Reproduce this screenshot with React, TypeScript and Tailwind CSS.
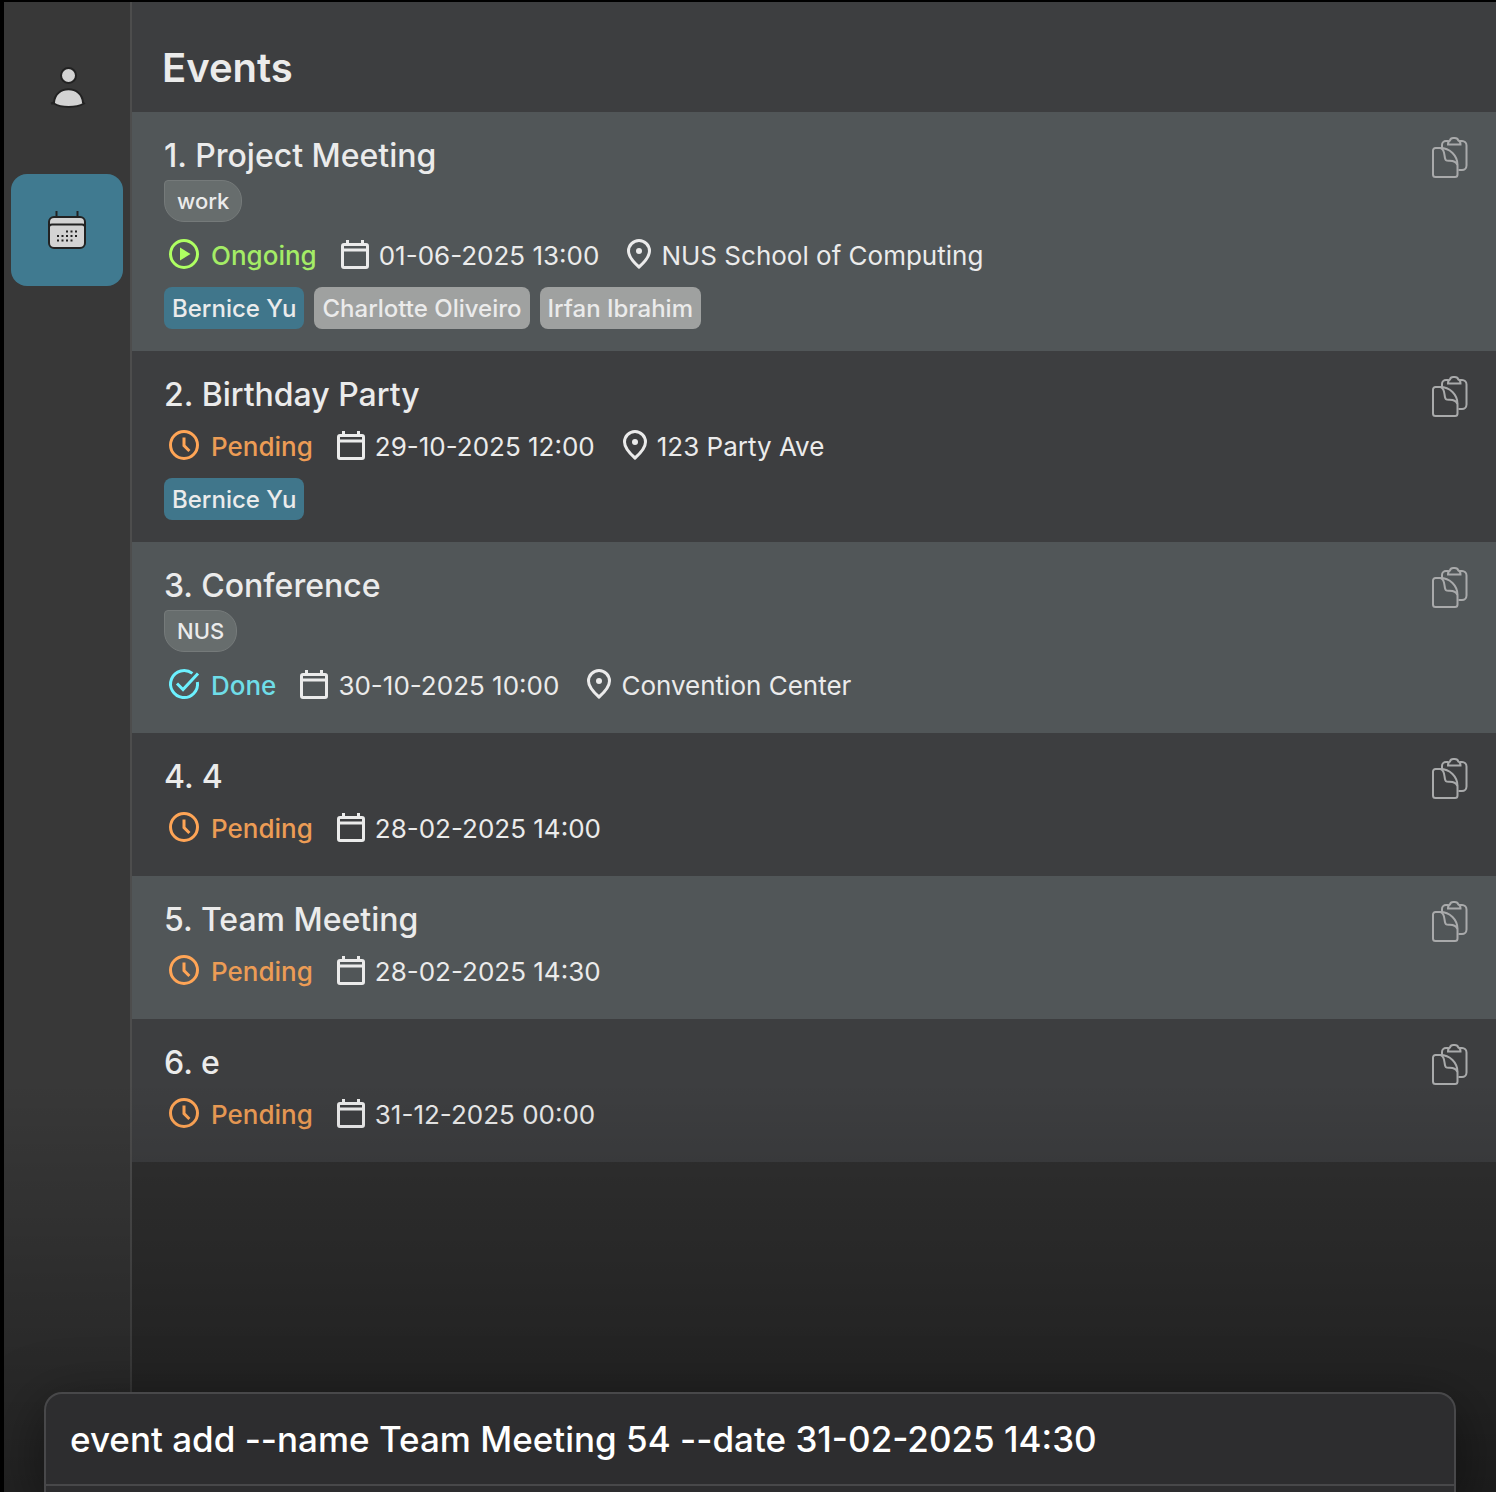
import type { ReactNode } from "react";

type Status = "Ongoing" | "Pending" | "Done";

interface EventItem {
  name: string;
  tag?: string;
  status: Status;
  date: string;
  location?: string;
  people?: { name: string; primary?: boolean }[];
}

const events: EventItem[] = [
  {
    name: "Project Meeting",
    tag: "work",
    status: "Ongoing",
    date: "01-06-2025 13:00",
    location: "NUS School of Computing",
    people: [{ name: "Bernice Yu", primary: true }, { name: "Charlotte Oliveiro" }, { name: "Irfan Ibrahim" }],
  },
  {
    name: "Birthday Party",
    status: "Pending",
    date: "29-10-2025 12:00",
    location: "123 Party Ave",
    people: [{ name: "Bernice Yu", primary: true }],
  },
  { name: "Conference", tag: "NUS", status: "Done", date: "30-10-2025 10:00", location: "Convention Center" },
  { name: "4", status: "Pending", date: "28-02-2025 14:00" },
  { name: "Team Meeting", status: "Pending", date: "28-02-2025 14:30" },
  { name: "e", status: "Pending", date: "31-12-2025 00:00" },
];

const statusText: Record<Status, string> = {
  Ongoing: "text-[#a4ec66]",
  Pending: "text-[#ec9c55]",
  Done: "text-[#6fdde8]",
};

const statusIcon: Record<Status, ReactNode> = {
  Ongoing: (
    <svg viewBox="0 0 36 36" className="size-9 text-[#aeff62]" fill="none" stroke="currentColor" strokeWidth="3">
      <circle cx="18" cy="18" r="13.5" />
      <path d="M14 11.5v13l10.5-6.5z" fill="currentColor" stroke="none" />
    </svg>
  ),
  Pending: (
    <svg viewBox="0 0 36 36" className="size-9 text-[#ffa556]" fill="none" stroke="currentColor" strokeWidth="3">
      <circle cx="18" cy="18" r="13.5" />
      <path d="M18 10.5v8.1l5.4 5.4" />
    </svg>
  ),
  Done: (
    <svg viewBox="0 0 36 36" className="size-9 text-[#6cf1ff]" fill="none" stroke="currentColor" strokeWidth="3">
      <path d="M26.4 7.4A13.5 13.5 0 1 0 31.4 16" />
      <path d="M11 17.5l6 6L32 7.5" />
    </svg>
  ),
};

function CalendarIcon() {
  return (
    <svg viewBox="0 0 36 36" className="size-9" fill="none" stroke="currentColor" strokeWidth="3" aria-hidden="true">
      <rect x="5.500" y="8.500" width="25" height="23" rx="1.500" />
      <path d="M5.500 14h25M10.500 4v4M25.500 4v4" />
    </svg>
  );
}

function PinIcon() {
  return (
    <svg viewBox="0 0 36 36" className="size-9" fill="none" stroke="currentColor" strokeWidth="3" aria-hidden="true">
      <path d="M18 31C13 26.600 7.500 21 7.500 15a10.500 10.500 0 0 1 21 0C28.500 21 23 26.600 18 31z" />
      <circle cx="18" cy="15" r="3" fill="currentColor" stroke="none" />
    </svg>
  );
}

function CopyIcon() {
  return (
    <svg viewBox="0 0 36 42" className="h-[42px] w-9" fill="none" stroke="#a9aaab" strokeWidth="2" aria-hidden="true">
      <path d="M10 12V9a4 4 0 0 1 4-4h2.500M28 5h2a4.500 4.500 0 0 1 4.500 4.500v20a4.500 4.500 0 0 1-4.500 4.500H26.500" />
      <path d="M16 8.500h12.500c0-2.800-.8-3.700-2.200-4C25.800 2.700 24.500 2 22.800 2h-1.600c-1.700 0-2.800.7-3.200 2.500-1.300.3-2 1.200-2 4z" />
      <path d="M1 14.500A2.500 2.500 0 0 1 3.500 12H8c10 0 17.500 7.500 17.500 17v9.500A2.500 2.500 0 0 1 23 41H3.500A2.500 2.500 0 0 1 1 38.500z" />
      <path d="M8.500 12c5.500 1.500 3 10.500 5.500 12.300 2 1.400 9.500-1.800 11.300 4.700" />
    </svg>
  );
}

function PersonIcon() {
  return (
    <svg viewBox="-1 -2 40 44" className="h-11 w-10 overflow-visible" fill="#d3d3d3" stroke="#222" strokeWidth="2" aria-hidden="true">
      <circle cx="20.500" cy="9.500" r="7.500" />
      <path d="M3 37.500l3-1C6.500 28 13 23.200 20.500 23.200S34.500 28 35 36.500l1 1C28 42 13 42 6 37.500z" />
    </svg>
  );
}

function CalendarNavIcon() {
  return (
    <svg viewBox="0 0 40 40" className="size-10" fill="none" stroke="#222" strokeWidth="2" aria-hidden="true">
      <path d="M9.500 1v6M30.500 1v6" />
      <rect x="2" y="7" width="36" height="31" rx="5" fill="#d3d3d3" />
      <path d="M2 17c0-1.500 1-2.500 3-2.500h30c2 0 3 1 3 2.500" />
      <path d="M19 21.500h12M10 26h21M10 30.500h17" strokeDasharray="2 2.500" />
    </svg>
  );
}

function EventRow({ event, index }: { event: EventItem; index: number }) {
  return (
    <li className="flex items-start justify-between pt-5 pr-7 pb-[22px] pl-8 odd:bg-[#515658] even:bg-[#3d3e40]">
      <div className="min-w-0">
        <h2 className="text-[32px] leading-[48px] font-medium">
          {index}. {event.name}
        </h2>
        {event.tag && (
          <div className="mb-1.5 flex">
            <span className="rounded-[20px] rounded-tl-sm border border-[#757a7a] bg-[#676d6d] px-3 text-[22px] leading-10 font-medium">
              {event.tag}
            </span>
          </div>
        )}
        <div className="mb-px flex h-[52px] items-center gap-5 text-[26px]">
          <span className={`flex items-center gap-[9px] pl-0.5 font-medium ${statusText[event.status]}`}>
            {statusIcon[event.status]}
            <span className="pt-0.5">{event.status}</span>
          </span>
          <span className="flex items-center gap-1.5">
            <CalendarIcon />
            <span className="pt-0.5">{event.date}</span>
          </span>
          {event.location && (
            <span className="flex items-center gap-1 pl-0.5">
              <PinIcon />
              <span className="pt-0.5">{event.location}</span>
            </span>
          )}
        </div>
        {event.people && (
          <ul className="mt-[7px] flex gap-2.5">
            {event.people.map((p) => (
              <li
                key={p.name}
                className={`rounded-lg px-2 pt-0.5 text-[24px] leading-10 font-medium ${p.primary ? "bg-[#40768b]" : "bg-[#9fa1a0]"}`}
              >
                {p.name}
              </li>
            ))}
          </ul>
        )}
      </div>
      <button type="button" aria-label={`Copy ${event.name}`} className="mt-1">
        <CopyIcon />
      </button>
    </li>
  );
}

export default function App() {
  return (
    <div className="relative flex min-h-screen overflow-hidden border-t-2 border-l-4 border-black bg-[#303030] font-['Inter',sans-serif] text-[#ebebeb]">
      <nav className="flex w-32 shrink-0 flex-col items-center gap-8 border-r-2 border-[#4d4d4d] bg-[#383838] pt-7">
        <button type="button" aria-label="Contacts" className="flex size-28 items-center justify-center rounded-2xl">
          <PersonIcon />
        </button>
        <button type="button" aria-label="Events" className="flex size-28 items-center justify-center rounded-2xl bg-[#407a90]">
          <CalendarNavIcon />
        </button>
      </nav>
      <main className="min-w-0 flex-1">
        <header className="bg-[#3d3e40] px-[30px] pt-9 pb-3.5">
          <h1 className="text-[40px] leading-[60px] font-semibold">Events</h1>
        </header>
        <ul>
          {events.map((event, i) => (
            <EventRow key={event.name} event={event} index={i + 1} />
          ))}
        </ul>
      </main>
      <div className="pointer-events-none absolute inset-x-0 bottom-0 h-[412px] bg-linear-to-b from-transparent to-black/40" />
      <form className="absolute right-10 bottom-0 left-10 rounded-t-[18px] border-2 border-b-0 border-[#48484a] bg-[#2d2d2f] shadow-[0_16px_60px_rgba(0,0,0,0.5)]">
        <input
          aria-label="Command"
          defaultValue="event add --name Team Meeting 54 --date 31-02-2025 14:30"
          className="block h-[90px] w-full bg-transparent px-6 text-[35px] font-medium text-white outline-none"
        />
        <div className="h-2 border-t-2 border-[#48484a]" />
      </form>
    </div>
  );
}
